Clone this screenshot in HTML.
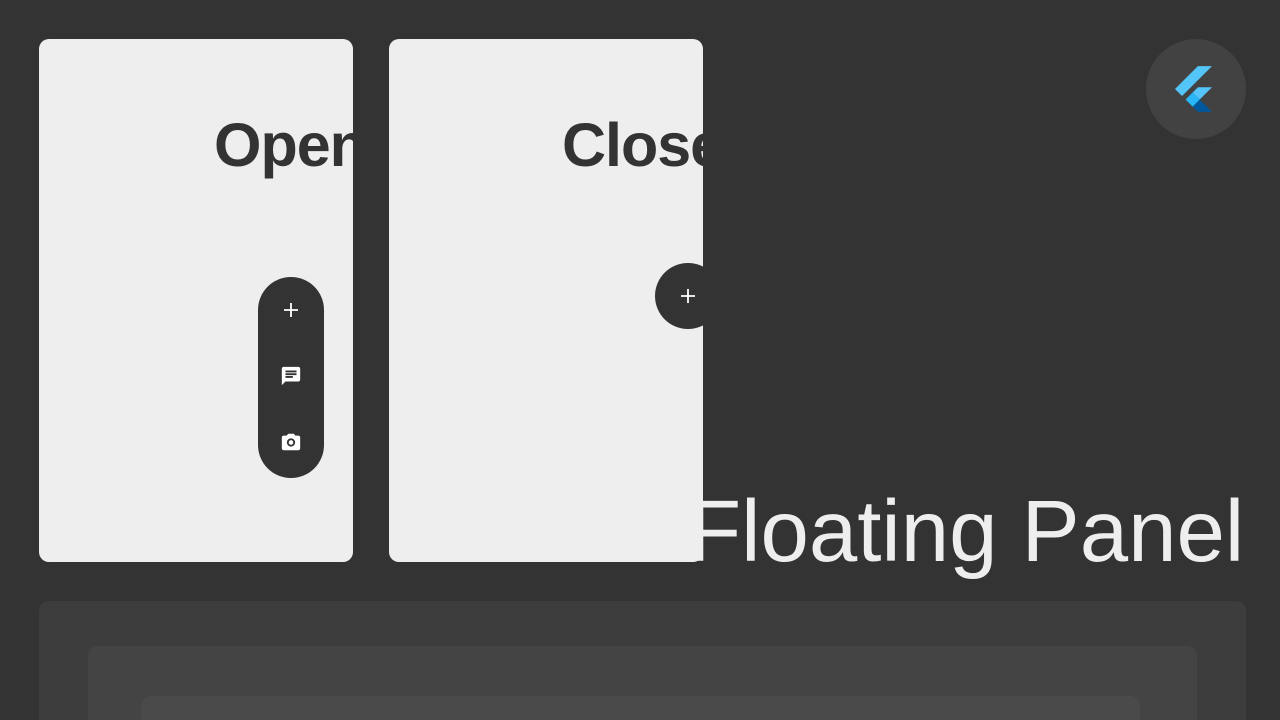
<!DOCTYPE html>
<html><head><meta charset="utf-8"><style>
html,body{margin:0;padding:0;width:1280px;height:720px;overflow:hidden;background:#333;font-family:"Liberation Sans",sans-serif;position:relative}
.card{position:absolute;top:39px;width:314px;height:523px;background:#eee;border-radius:10px;overflow:hidden}
.card h1{position:absolute;top:73px;margin:0;font-size:61px;font-weight:bold;color:#333;white-space:nowrap;line-height:66px;letter-spacing:-1px}
.pill{position:absolute;left:219px;top:238px;width:66px;height:201px;border-radius:33px;background:#333}
.circ{position:absolute;left:266px;top:224px;width:66px;height:66px;border-radius:33px;background:#333}
.p{position:absolute}
</style></head><body>
<div class="card" style="left:39px">
<h1 style="left:175px">Open</h1>
<div class="pill">
<svg style="position:absolute;left:23px;top:23px" width="20" height="20" viewBox="0 0 20 20"><path d="M10 3v14M3 10h14" stroke="#fff" stroke-width="1.8"/></svg>
<svg style="position:absolute;left:22px;top:88px" width="22" height="22" viewBox="0 0 24 24"><path fill="#fff" d="M20 2H4c-1.1 0-2 .9-2 2v18l4-4h14c1.1 0 2-.9 2-2V4c0-1.1-.9-2-2-2zM6 9h12v2H6V9zm8 5H6v-2h8v2zm4-6H6V6h12v2z"/></svg>
<svg style="position:absolute;left:22px;top:154px" width="22" height="22" viewBox="0 0 24 24"><path fill="#fff" d="M9 3L7.2 5H4c-1.1 0-2 .9-2 2v12c0 1.1.9 2 2 2h16c1.1 0 2-.9 2-2V7c0-1.1-.9-2-2-2h-3.2L15 3H9zm3 5a4.5 4.5 0 110 9 4.5 4.5 0 010-9zm0 2a2.5 2.5 0 100 5 2.5 2.5 0 000-5z"/></svg>
</div>
</div>
<div class="card" style="left:389px">
<h1 style="left:173px">Close</h1>
<div class="circ">
<svg style="position:absolute;left:23px;top:23px" width="20" height="20" viewBox="0 0 20 20"><path d="M10 3v14M3 10h14" stroke="#fff" stroke-width="1.8"/></svg>
</div>
</div>
<div style="position:absolute;left:688px;top:484px;font-size:87px;color:#eee;white-space:nowrap;line-height:96px">Floating Panel</div>
<div style="position:absolute;left:1146px;top:39px;width:100px;height:100px;border-radius:50px;background:#424242"></div>
<svg style="position:absolute;left:1174px;top:66px" width="39" height="46" viewBox="9 10 148 182">
<polygon points="37.7,128.9 9.8,101 100.4,10.4 156.2,10.4" fill="#54c5f8"/>
<polygon points="156.2,94 100.4,94 79.5,114.7 107.4,142.6" fill="#54c5f8"/>
<polygon points="79.5,170.7 100.4,191.6 156.2,191.6 107.4,142.6" fill="#01579b"/>
<polygon points="79.5,114.7 51.6,142.6 79.5,170.5 107.4,142.6" fill="#29b6f6"/>
</svg>
<div class="p" style="left:39px;top:601px;width:1207px;height:119px;background:#3d3d3d;border-radius:10px 10px 0 0"></div>
<div class="p" style="left:88px;top:646px;width:1109px;height:74px;background:#444;border-radius:10px 10px 0 0"></div>
<div class="p" style="left:141px;top:696px;width:999px;height:24px;background:#4a4a4a;border-radius:10px 10px 0 0"></div>
</body></html>
